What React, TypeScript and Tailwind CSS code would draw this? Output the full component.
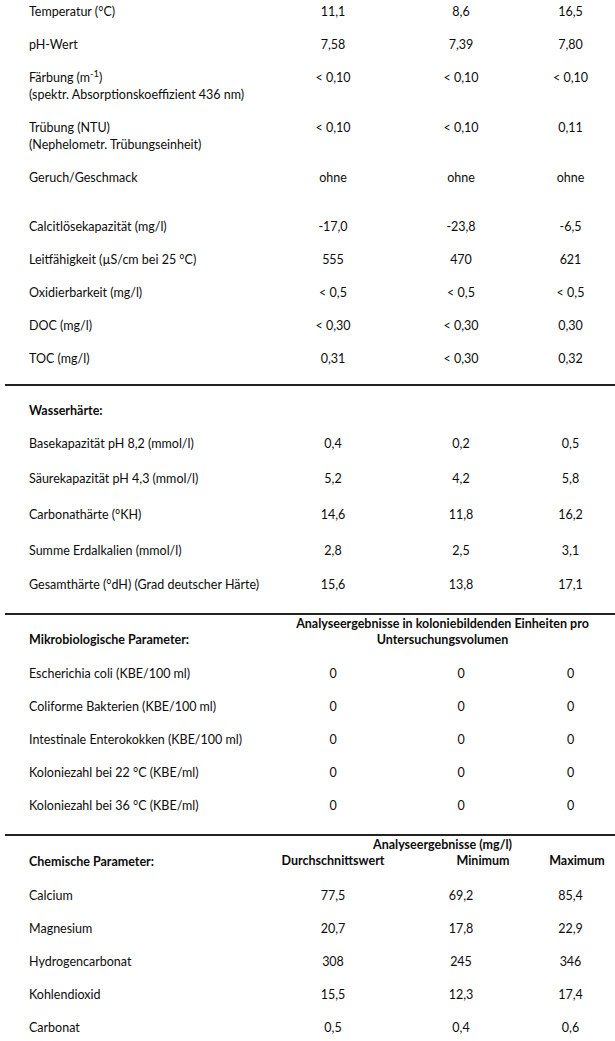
import type { ReactNode } from "react";

const cols = "grid grid-cols-[270px_126px_130px_89px]";

type RowProps = {
    label: ReactNode;
    sub?: string;
    values?: string[];
    pt: string;
    bold?: boolean;
};

const Row = ({ label, sub, values = [], pt, bold }: RowProps) => (
    <div className={`${cols} ${pt}`}>
        <div className={`pl-[29px] ${bold ? "font-bold" : ""}`}>
            <p>{label}</p>
            {sub && <p>{sub}</p>}
        </div>
        {values.map((v, i) => (
            <p key={i} className="text-center">{v}</p>
        ))}
    </div>
);

const Divider = ({ mt }: { mt: string }) => (
    <div className={`ml-[5px] h-[2px] bg-[#222] ${mt}`} />
);

const App = () => {
    return (
        <div className="w-[615px] h-[1041px] overflow-hidden bg-white text-[#0c0c0c] text-[12.5px] leading-[17px] font-['Lato',sans-serif]">
            {/* allgemeine Parameter */}
            <Row pt="pt-[3px]" label="Temperatur (°C)" values={["11,1", "8,6", "16,5"]} />
            <Row pt="pt-[16px]" label="pH-Wert" values={["7,58", "7,39", "7,80"]} />
            <Row
                pt="pt-[16px]"
                label={<>Färbung (m<sup>-1</sup>)</>}
                sub="(spektr. Absorptionskoeffizient 436 nm)"
                values={["< 0,10", "< 0,10", "< 0,10"]}
            />
            <Row
                pt="pt-[16px]"
                label="Trübung (NTU)"
                sub="(Nephelometr. Trübungseinheit)"
                values={["< 0,10", "< 0,10", "0,11"]}
            />
            <Row pt="pt-[16px]" label="Geruch/Geschmack" values={["ohne", "ohne", "ohne"]} />
            <Row pt="pt-[32px]" label="Calcitlösekapazität (mg/l)" values={["-17,0", "-23,8", "-6,5"]} />
            <Row pt="pt-[16px]" label="Leitfähigkeit (µS/cm bei 25 °C)" values={["555", "470", "621"]} />
            <Row pt="pt-[16px]" label="Oxidierbarkeit (mg/l)" values={["< 0,5", "< 0,5", "< 0,5"]} />
            <Row pt="pt-[16px]" label="DOC (mg/l)" values={["< 0,30", "< 0,30", "0,30"]} />
            <Row pt="pt-[16px]" label="TOC (mg/l)" values={["0,31", "< 0,30", "0,32"]} />
            <Divider mt="mt-[17px]" />

            {/* Wasserhärte */}
            <Row pt="pt-[16px]" bold label="Wasserhärte:" />
            <Row pt="pt-[16px]" label="Basekapazität pH 8,2 (mmol/l)" values={["0,4", "0,2", "0,5"]} />
            <Row pt="pt-[18px]" label="Säurekapazität pH 4,3 (mmol/l)" values={["5,2", "4,2", "5,8"]} />
            <Row pt="pt-[19px]" label="Carbonathärte (°KH)" values={["14,6", "11,8", "16,2"]} />
            <Row pt="pt-[19px]" label="Summe Erdalkalien (mmol/l)" values={["2,8", "2,5", "3,1"]} />
            <Row pt="pt-[17px]" label="Gesamthärte (°dH) (Grad deutscher Härte)" values={["15,6", "13,8", "17,1"]} />
            <Divider mt="mt-[20px]" />

            {/* Mikrobiologie */}
            <div className={`${cols} pt-[1px] leading-[16px] font-bold`}>
                <p className="pl-[29px] self-end">Mikrobiologische Parameter:</p>
                <p className="col-span-3 text-center">
                    Analyseergebnisse in koloniebildenden Einheiten pro
                    <br />
                    Untersuchungsvolumen
                </p>
            </div>
            <Row pt="pt-[17px]" label="Escherichia coli (KBE/100 ml)" values={["0", "0", "0"]} />
            <Row pt="pt-[16px]" label="Coliforme Bakterien (KBE/100 ml)" values={["0", "0", "0"]} />
            <Row pt="pt-[16px]" label="Intestinale Enterokokken (KBE/100 ml)" values={["0", "0", "0"]} />
            <Row pt="pt-[16px]" label="Koloniezahl bei 22 °C (KBE/ml)" values={["0", "0", "0"]} />
            <Row pt="pt-[16px]" label="Koloniezahl bei 36 °C (KBE/ml)" values={["0", "0", "0"]} />
            <Divider mt="mt-[20px]" />

            {/* Chemie */}
            <div className="pt-[1px] leading-[16px] font-bold">
                <div className={cols}>
                    <span />
                    <p className="col-span-3 text-center">Analyseergebnisse (mg/l)</p>
                </div>
                <div className={cols}>
                    <p className="pl-[29px] pt-[1px]">Chemische Parameter:</p>
                    <p className="text-center">Durchschnittswert</p>
                    <p className="text-center pl-[44px]">Minimum</p>
                    <p className="text-center pl-[13px]">Maximum</p>
                </div>
            </div>
            <Row pt="pt-[17px]" label="Calcium" values={["77,5", "69,2", "85,4"]} />
            <Row pt="pt-[16px]" label="Magnesium" values={["20,7", "17,8", "22,9"]} />
            <Row pt="pt-[16px]" label="Hydrogencarbonat" values={["308", "245", "346"]} />
            <Row pt="pt-[16px]" label="Kohlendioxid" values={["15,5", "12,3", "17,4"]} />
            <Row pt="pt-[16px]" label="Carbonat" values={["0,5", "0,4", "0,6"]} />
        </div>
    );
};

export default App;
